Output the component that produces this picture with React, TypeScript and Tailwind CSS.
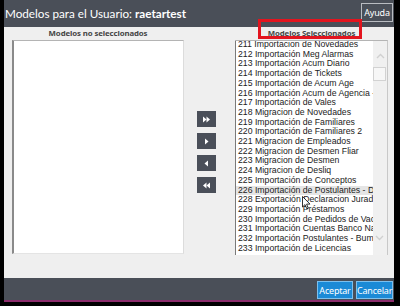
import React from 'react';

const modelos = [
  '211 Importacion de Novedades',
  '212 Importación Meg Alarmas',
  '213 Importación Acum Diario',
  '214 Importación de Tickets',
  '215 Importación de Acum Age',
  '216 Importación Acum de Agencia - Sucursal',
  '217 Importación de Vales',
  '218 Migracion de Novedades',
  '219 Importación de Familiares',
  '220 Importación de Familiares 2',
  '221 Migracion de Empleados',
  '222 Migracion de Desmen Fliar',
  '223 Migracion de Desmen',
  '224 Migracion de Desliq',
  '225 Importación de Conceptos',
  '226 Importación de Postulantes - Datos',
  '228 Exportación Declaracion Jurada',
  '229 Importación Préstamos',
  '230 Importación de Pedidos de Vacaciones',
  '231 Importación Cuentas Banco Nación',
  '232 Importación Postulantes - Bumeran',
  '233 Importación de Licencias',
];

type Dir = 'allRight' | 'right' | 'left' | 'allLeft';

function MoveButton({ dir }: { dir: Dir }) {
  return (
    <button className="flex h-[16px] w-[19px] items-center justify-center bg-[#4a4f59]">
      <svg width="9" height="7" viewBox="0 0 9 7" fill="#ffffff">
        {dir === 'allRight' && (
          <>
            <polygon points="1,0.5 4.5,3.5 1,6.5" />
            <polygon points="4.5,0.5 8,3.5 4.5,6.5" />
          </>
        )}
        {dir === 'right' && <polygon points="3,0.5 6.5,3.5 3,6.5" />}
        {dir === 'left' && <polygon points="6,0.5 2.5,3.5 6,6.5" />}
        {dir === 'allLeft' && (
          <>
            <polygon points="4.5,0.5 1,3.5 4.5,6.5" />
            <polygon points="8,0.5 4.5,3.5 8,6.5" />
          </>
        )}
      </svg>
    </button>
  );
}

export default function App() {
  return (
    <div className="h-[306px] w-[400px] bg-black pb-[4px] pl-[4px] pr-[6px] font-['Noto_Sans',sans-serif]">
      <div className="flex h-full flex-col">
        <div className="flex h-[27px] items-center justify-between bg-[#4a4f58] pl-[1px] pr-[1px]">
          <span className="font-['Lato',sans-serif] text-[11.7px] leading-none text-white">
            Modelos para el Usuario: <b className="font-bold">raetartest</b>
          </span>
          <button className="mb-[3px] h-[19px] w-[32px] border border-[#b9bcc1] bg-[#4a4f58] text-[9px] leading-none tracking-[-0.2px] text-white">
            Ayuda
          </button>
        </div>

        <div className="flex flex-1 bg-[#efefef] pl-[8px]">
          <div className="flex w-[172px] flex-col">
            <div className="flex h-[13px] items-center justify-center text-[7.8px] font-bold leading-none tracking-[-0.1px] text-[#444]">
              Modelos no seleccionados
            </div>
            <div className="h-[214px] border-b border-l-2 border-r border-t border-b-[#e4e4e4] border-l-[#8a8a8a] border-r-[#dcdcdc] border-t-[#b4b4b4] bg-white" />
          </div>

          <div className="ml-[13px] flex w-[19px] flex-col gap-[6px] pt-[84px]">
            <MoveButton dir="allRight" />
            <MoveButton dir="right" />
            <MoveButton dir="left" />
            <MoveButton dir="allLeft" />
          </div>

          <div className="relative ml-[19px] flex w-[153px] flex-col">
            <div className="flex h-[13px] items-center justify-center text-[7.8px] font-bold leading-none tracking-[-0.1px] text-[#444]">
              Modelos Seleccionados
            </div>
            <div className="absolute left-[23px] top-[-8px] h-[20px] w-[104px] border-[3px] border-[#e3141e]" />
            <div className="flex h-[215px] border-r border-t border-r-[#c8c8c8] border-t-[#b4b4b4]">
              <div className="h-[214px] w-[138px] overflow-hidden border-l border-l-[#7a7a7a] bg-white font-['Liberation_Sans',Arial,sans-serif] text-[8.7px] leading-[9.7px] text-[#222]">
                <div className="mt-[-1px]">
                  {modelos.map((m) => (
                    <div
                      key={m}
                      className={`whitespace-nowrap pl-[2px] ${m.startsWith('226') ? 'bg-[#e5e5e5]' : ''}`}
                    >
                      {m}
                    </div>
                  ))}
                </div>
              </div>
              <div className="relative flex-1 bg-[#f0f0f0]">
                <svg className="absolute left-[3px] top-[12px]" width="9" height="6" viewBox="0 0 9 6">
                  <polyline points="1,5 4.5,1.5 8,5" fill="none" stroke="#d0d0d0" strokeWidth="1.4" />
                </svg>
                <div className="absolute left-0 top-[26px] h-[14px] w-[13px] border border-[#d2d2d2] bg-[#f7f7f7]" />
                <svg className="absolute left-[2px] top-[194px]" width="9" height="6" viewBox="0 0 9 6">
                  <polyline points="1,1 4.5,4.5 8,1" fill="none" stroke="#d0d0d0" strokeWidth="1.4" />
                </svg>
              </div>
            </div>
            <svg className="absolute left-[67px] top-[169px]" width="9" height="14" viewBox="0 0 9 14">
              <path d="M0.5 0.5 L0.5 11 L3 8.6 L4.8 12.8 L6.3 12.2 L4.6 8.1 L8 8.1 Z" fill="#ffffff" stroke="#000" strokeWidth="0.8" />
            </svg>
          </div>
        </div>

        <div className="flex h-[24px] items-start justify-end gap-[3px] border-b-2 border-b-[#8b2c6b] bg-[#4a4f58] pr-[1px] pt-[3px]">
          <button className="h-[18px] w-[36px] border border-[#7cc0ee] bg-[#1b8ad6] text-[9px] leading-none tracking-[-0.2px] text-white">
            Aceptar
          </button>
          <button className="h-[18px] w-[37px] border border-[#7cc0ee] bg-[#1b8ad6] text-[9px] leading-none tracking-[-0.2px] text-white">
            Cancelar
          </button>
        </div>
      </div>
    </div>
  );
}
